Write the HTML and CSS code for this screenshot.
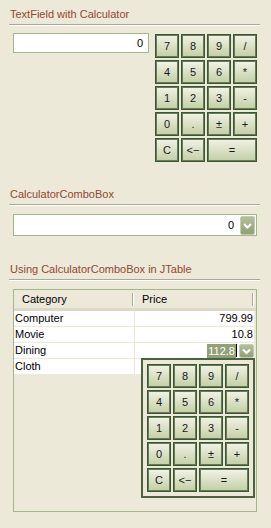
FILE: index.html
```html
<!DOCTYPE html>
<html lang="en">
<head>
    <meta charset="UTF-8">
    <meta name="viewport" content="width=device-width, initial-scale=1.0">
    <title>Calculator Demo</title>
    <link rel="stylesheet" href="styles.css">
</head>
<body>
    <div class="page">
        <div class="group">
            <div class="group-title">TextField with Calculator</div>
            <div class="group-body calc-section">
                <div class="field">0</div>
                <div class="calc inline-calc">
                    <div class="key">7</div><div class="key">8</div><div class="key">9</div><div class="key">/</div>
                    <div class="key">4</div><div class="key">5</div><div class="key">6</div><div class="key">*</div>
                    <div class="key">1</div><div class="key">2</div><div class="key">3</div><div class="key">-</div>
                    <div class="key">0</div><div class="key">.</div><div class="key">±</div><div class="key">+</div>
                    <div class="key">C</div><div class="key">&lt;−</div><div class="key wide">=</div>
                </div>
            </div>
        </div>

        <div class="group">
            <div class="group-title">CalculatorComboBox</div>
            <div class="group-body combo-section">
                <div class="combo">
                    <span class="combo-value">0</span>
                    <span class="arrow-btn">
                        <svg width="15" height="19" viewBox="0 0 15 19"><polyline points="4,8 7.5,11.5 11,8" fill="none" stroke="#fff" stroke-width="2.2"/></svg>
                    </span>
                </div>
            </div>
        </div>

        <div class="group">
            <div class="group-title">Using CalculatorComboBox in JTable</div>
            <div class="group-body table-section">
                <div class="table-box">
                    <div class="grid-head">
                        <div class="head-cell">Category</div>
                        <div class="head-cell">Price</div>
                    </div>
                    <div class="grid-row">
                        <div class="cell">Computer</div>
                        <div class="cell num">799.99</div>
                    </div>
                    <div class="grid-row">
                        <div class="cell">Movie</div>
                        <div class="cell num">10.8</div>
                    </div>
                    <div class="grid-row">
                        <div class="cell">Dining</div>
                        <div class="cell editing">
                            <span class="sel">112.8</span><span class="caret"></span>
                            <span class="arrow-btn small">
                                <svg width="15" height="14" viewBox="0 0 15 14"><polyline points="4,5.5 7.5,9 11,5.5" fill="none" stroke="#fff" stroke-width="2.2"/></svg>
                            </span>
                        </div>
                    </div>
                    <div class="grid-row">
                        <div class="cell">Cloth</div>
                        <div class="cell num"></div>
                    </div>

                    <div class="popup">
                        <div class="calc">
                            <div class="key">7</div><div class="key">8</div><div class="key">9</div><div class="key">/</div>
                            <div class="key">4</div><div class="key">5</div><div class="key">6</div><div class="key">*</div>
                            <div class="key">1</div><div class="key">2</div><div class="key">3</div><div class="key">-</div>
                            <div class="key">0</div><div class="key">.</div><div class="key">±</div><div class="key">+</div>
                            <div class="key">C</div><div class="key">&lt;−</div><div class="key wide">=</div>
                        </div>
                    </div>
                </div>
            </div>
        </div>
    </div>
</body>
</html>
```

FILE: styles.css
```css
body {
    margin: 0;
    background-color: #ece9d8;
    font-family: "Liberation Sans", Arial, sans-serif;
    font-size: 11px;
    color: #000;
}
.page {
    padding: 0 11px 0 9px;
}
.group-title {
    padding: 8px 0 3px 1px;
    line-height: 13px;
    color: #93472e;
    border-bottom: 1px solid #aca899;
    box-shadow: 0 1px 0 #fff;
}
.group-body {
    padding-left: 4px;
    padding-right: 3px;
}
.calc-section {
    display: flex;
    align-items: flex-start;
    padding-top: 8px;
    padding-bottom: 18px;
}
.field {
    width: 136px;
    height: 20px;
    box-sizing: border-box;
    border: 1px solid #a3b58a;
    background-color: #fff;
    text-align: right;
    padding-right: 5px;
    line-height: 18px;
}
.inline-calc {
    margin-left: 6px;
    margin-top: 1px;
}
.calc {
    display: grid;
    grid-template-columns: repeat(4, 24px);
    grid-auto-rows: 24px;
    gap: 2px;
}
.key {
    box-sizing: border-box;
    border: 1px solid #3d5631;
    box-shadow: inset 0 0 0 1px #667c56;
    background: linear-gradient(#f2f3e6, #c3cea5);
    display: flex;
    align-items: center;
    justify-content: center;
    color: #1a1a1a;
}
.key.wide {
    grid-column: span 2;
}
.combo-section {
    padding-top: 9px;
    padding-bottom: 19px;
}
.combo {
    height: 22px;
    box-sizing: border-box;
    border: 1px solid #a3b58a;
    background-color: #fff;
    display: flex;
    align-items: center;
    justify-content: flex-end;
}
.combo-value {
    padding-right: 6px;
}
.arrow-btn {
    display: block;
    width: 15px;
    height: 19px;
    margin-right: 1px;
    box-sizing: border-box;
    border: 1px solid #c3cdb0;
    border-radius: 2px;
    background: linear-gradient(#b3bf9a, #909f74);
}
.arrow-btn svg {
    display: block;
    margin: -1px;
}
.arrow-btn.small {
    height: 14px;
    margin-left: 2px;
    margin-right: 0;
}
.table-section {
    padding-top: 9px;
}
.table-box {
    position: relative;
    height: 223px;
    box-sizing: border-box;
    border: 1px solid #a3b58a;
}
.grid-head {
    display: grid;
    grid-template-columns: 120px 120px;
    border-bottom: 3px solid #dcd8c6;
}
.head-cell {
    position: relative;
    height: 18px;
    line-height: 18px;
    padding-left: 8px;
}
.head-cell::after {
    content: "";
    position: absolute;
    right: 1px;
    top: 3px;
    bottom: 2px;
    width: 1px;
    background-color: #aca899;
    box-shadow: 1px 0 0 #fff;
}
.grid-row {
    display: grid;
    grid-template-columns: 121px 119px;
    border-bottom: 1px solid #ece9d8;
    background-color: #fff;
    width: 240px;
}
.cell {
    height: 15px;
    line-height: 15px;
    padding-left: 1px;
    white-space: nowrap;
}
.cell:first-child {
    border-right: 1px solid #ece9d8;
    box-sizing: border-box;
}
.cell.num {
    text-align: right;
    padding-right: 1px;
}
.cell.editing {
    display: flex;
    align-items: center;
    justify-content: flex-end;
}
.sel {
    background-color: #939f79;
    color: #fff;
    line-height: 14px;
    padding: 0 1px;
}
.caret {
    width: 1px;
    height: 13px;
    background-color: #000;
}
.popup {
    position: absolute;
    left: 127px;
    top: 68px;
    width: 114px;
    height: 140px;
    box-sizing: border-box;
    border: 2px solid #4b6340;
    padding: 4px;
    background-color: #ece9d8;
}
```
